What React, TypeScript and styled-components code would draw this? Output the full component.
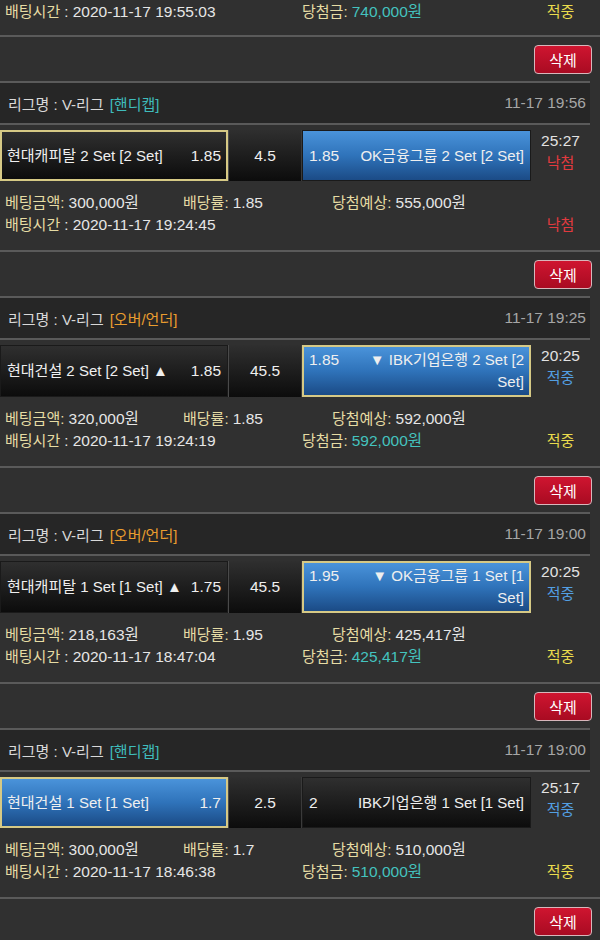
import React from 'react';
import styled, { createGlobalStyle } from 'styled-components';

const FONT = `"Liberation Sans", Arial, "Noto Sans CJK KR", sans-serif`;

const Global = createGlobalStyle`
  html, body { margin: 0; padding: 0; background: #303030; }
  body { font-family: ${FONT}; font-size: 15px; color: #e4e4e4; }
  * { box-sizing: border-box; }
`;

const Page = styled.div`
  width: 600px;
  background: #303030;
  overflow: hidden;
`;

const Separator = styled.div`
  height: 2px;
  background: #5a5a5a;
`;

const ButtonRow = styled.div`
  height: 44px;
  display: flex;
  align-items: center;
  justify-content: flex-end;
  padding-right: 8px;
`;

const DeleteButton = styled.button`
  width: 58px;
  height: 29px;
  padding: 0;
  border-radius: 4px;
  border: 1px solid #d8b6bb;
  background: linear-gradient(#cf1530, #a90b22);
  color: #ffffff;
  font-family: ${FONT};
  font-size: 15px;
  cursor: pointer;
`;

const Header = styled.div`
  width: 590px;
  height: 44px;
  border-top: 2px solid #5a5a5a;
  border-bottom: 2px solid #5a5a5a;
  background: #262626;
  display: flex;
  align-items: center;
  justify-content: space-between;
  padding: 0 4px 0 8px;
`;

const LeagueName = styled.span`
  color: #d9d9d9;
`;

const LeagueType = styled.span<{ $color: string }>`
  color: ${(p) => p.$color};
  margin-left: 6px;
`;

const HeaderDate = styled.span`
  color: #a6a6a6;
  font-size: 15.5px;
`;

const BetRow = styled.div`
  margin-top: 5px;
  display: grid;
  grid-template-columns: 228px 74px 229px 59px;
  min-height: 51px;
`;

const BetBox = styled.div<{ $blue?: boolean; $outlined?: boolean }>`
  display: flex;
  align-items: center;
  padding: 2px ${(p) => (p.$outlined ? '5px' : '6px')};
  color: #efefef;
  line-height: 22px;
  background: ${(p) =>
    p.$blue
      ? 'linear-gradient(#4a93da, #2f73ba 50%, #1b4b86)'
      : 'linear-gradient(#2f2f2f, #0c0c0c)'};
  border: ${(p) => (p.$outlined ? '2px solid #d6c985' : '1px solid #1a1a1a')};
`;

const BetContent = styled.div`
  flex: 1;
  display: flex;
  align-items: flex-start;
  justify-content: space-between;
  gap: 6px;
`;

const TeamName = styled.span<{ $right?: boolean }>`
  flex: 1;
  min-width: 0;
  text-align: ${(p) => (p.$right ? 'right' : 'left')};
  white-space: ${(p) => (p.$right ? 'normal' : 'nowrap')};
`;

const Odds = styled.span`
  flex: none;
  font-size: 15.5px;
`;

const MiddleCell = styled.div`
  display: flex;
  align-items: center;
  justify-content: center;
  background: linear-gradient(#2f2f2f, #0c0c0c);
  border-left: 1px solid #4a4a4a;
  border-right: 1px solid #3a3a3a;
  color: #efefef;
  font-size: 15.5px;
`;

const ResultCell = styled.div`
  display: flex;
  flex-direction: column;
  align-items: center;
  line-height: 22px;
`;

const Clock = styled.span`
  color: #e2e2e2;
  font-size: 15.5px;
`;

const Status = styled.span<{ $color: string }>`
  color: ${(p) => p.$color};
`;

const Info = styled.div<{ $top?: boolean }>`
  padding: ${(p) => (p.$top ? '1px 0 12px 5px' : '11px 0 14px 5px')};
  line-height: 22px;
`;

const AmountRow = styled.div`
  display: grid;
  grid-template-columns: 178px 149px 1fr;
  white-space: nowrap;
`;

const TimeRow = styled.div`
  display: grid;
  grid-template-columns: 297px 229px 59px;
  white-space: nowrap;
`;

const Label = styled.span`
  color: #e6dca4;
`;

const Value = styled.span<{ $teal?: boolean }>`
  color: ${(p) => (p.$teal ? '#44c3bf' : '#e6e6e6')};
  font-size: 15.5px;
`;

const StatusCenter = styled.span<{ $color: string }>`
  color: ${(p) => p.$color};
  text-align: center;
`;

const RED = '#e23a3f';
const YELLOW = '#e9db4d';
const BLUE = '#539fe2';

type Side = { name: string; odds: string; blue?: boolean; outlined?: boolean };
type Bet = {
  type: string;
  typeColor: string;
  date: string;
  home: Side;
  mid: string;
  away: Side;
  clock: string;
  clockStatus: string;
  clockColor: string;
  stake: string;
  rate: string;
  expected: string;
  betTime: string;
  won?: string;
  result: string;
  resultColor: string;
};

const bets: Bet[] = [
  {
    type: '[핸디캡]',
    typeColor: '#3fbcbc',
    date: '11-17 19:56',
    home: { name: '현대캐피탈 2 Set [2 Set]', odds: '1.85', outlined: true },
    mid: '4.5',
    away: { name: 'OK금융그룹 2 Set [2 Set]', odds: '1.85', blue: true },
    clock: '25:27',
    clockStatus: '낙첨',
    clockColor: RED,
    stake: '300,000원',
    rate: '1.85',
    expected: '555,000원',
    betTime: '2020-11-17 19:24:45',
    result: '낙첨',
    resultColor: RED,
  },
  {
    type: '[오버/언더]',
    typeColor: '#e99d2f',
    date: '11-17 19:25',
    home: { name: '현대건설 2 Set [2 Set] ▲', odds: '1.85' },
    mid: '45.5',
    away: { name: '▼ IBK기업은행 2 Set [2 Set]', odds: '1.85', blue: true, outlined: true },
    clock: '20:25',
    clockStatus: '적중',
    clockColor: BLUE,
    stake: '320,000원',
    rate: '1.85',
    expected: '592,000원',
    betTime: '2020-11-17 19:24:19',
    won: '592,000원',
    result: '적중',
    resultColor: YELLOW,
  },
  {
    type: '[오버/언더]',
    typeColor: '#e99d2f',
    date: '11-17 19:00',
    home: { name: '현대캐피탈 1 Set [1 Set] ▲', odds: '1.75' },
    mid: '45.5',
    away: { name: '▼ OK금융그룹 1 Set [1 Set]', odds: '1.95', blue: true, outlined: true },
    clock: '20:25',
    clockStatus: '적중',
    clockColor: BLUE,
    stake: '218,163원',
    rate: '1.95',
    expected: '425,417원',
    betTime: '2020-11-17 18:47:04',
    won: '425,417원',
    result: '적중',
    resultColor: YELLOW,
  },
  {
    type: '[핸디캡]',
    typeColor: '#3fbcbc',
    date: '11-17 19:00',
    home: { name: '현대건설 1 Set [1 Set]', odds: '1.7', blue: true, outlined: true },
    mid: '2.5',
    away: { name: 'IBK기업은행 1 Set [1 Set]', odds: '2' },
    clock: '25:17',
    clockStatus: '적중',
    clockColor: BLUE,
    stake: '300,000원',
    rate: '1.7',
    expected: '510,000원',
    betTime: '2020-11-17 18:46:38',
    won: '510,000원',
    result: '적중',
    resultColor: YELLOW,
  },
];

function TimeLine({ time, won, result, color }: { time: string; won?: string; result: string; color: string }) {
  return (
    <TimeRow>
      <span>
        <Label>배팅시간</Label> : <Value>{time}</Value>
      </span>
      <span>
        {won && (
          <>
            <Label>당첨금:</Label> <Value $teal>{won}</Value>
          </>
        )}
      </span>
      <StatusCenter $color={color}>{result}</StatusCenter>
    </TimeRow>
  );
}

function BetCard({ bet }: { bet: Bet }) {
  return (
    <>
      <Header>
        <span>
          <LeagueName>리그명 : V-리그</LeagueName>
          <LeagueType $color={bet.typeColor}>{bet.type}</LeagueType>
        </span>
        <HeaderDate>{bet.date}</HeaderDate>
      </Header>
      <BetRow>
        <BetBox $blue={bet.home.blue} $outlined={bet.home.outlined}>
          <BetContent>
            <TeamName>{bet.home.name}</TeamName>
            <Odds>{bet.home.odds}</Odds>
          </BetContent>
        </BetBox>
        <MiddleCell>{bet.mid}</MiddleCell>
        <BetBox $blue={bet.away.blue} $outlined={bet.away.outlined}>
          <BetContent>
            <Odds>{bet.away.odds}</Odds>
            <TeamName $right>{bet.away.name}</TeamName>
          </BetContent>
        </BetBox>
        <ResultCell>
          <Clock>{bet.clock}</Clock>
          <Status $color={bet.clockColor}>{bet.clockStatus}</Status>
        </ResultCell>
      </BetRow>
      <Info>
        <AmountRow>
          <span>
            <Label>베팅금액:</Label> <Value>{bet.stake}</Value>
          </span>
          <span>
            <Label>배당률:</Label> <Value>{bet.rate}</Value>
          </span>
          <span>
            <Label>당첨예상:</Label> <Value>{bet.expected}</Value>
          </span>
        </AmountRow>
        <TimeLine time={bet.betTime} won={bet.won} result={bet.result} color={bet.resultColor} />
      </Info>
      <Separator />
      <ButtonRow>
        <DeleteButton>삭제</DeleteButton>
      </ButtonRow>
    </>
  );
}

export default function App() {
  return (
    <>
      <Global />
      <Page>
        <Info $top>
          <TimeLine time="2020-11-17 19:55:03" won="740,000원" result="적중" color={YELLOW} />
        </Info>
        <Separator />
        <ButtonRow>
          <DeleteButton>삭제</DeleteButton>
        </ButtonRow>
        {bets.map((b, i) => (
          <BetCard key={i} bet={b} />
        ))}
      </Page>
    </>
  );
}
